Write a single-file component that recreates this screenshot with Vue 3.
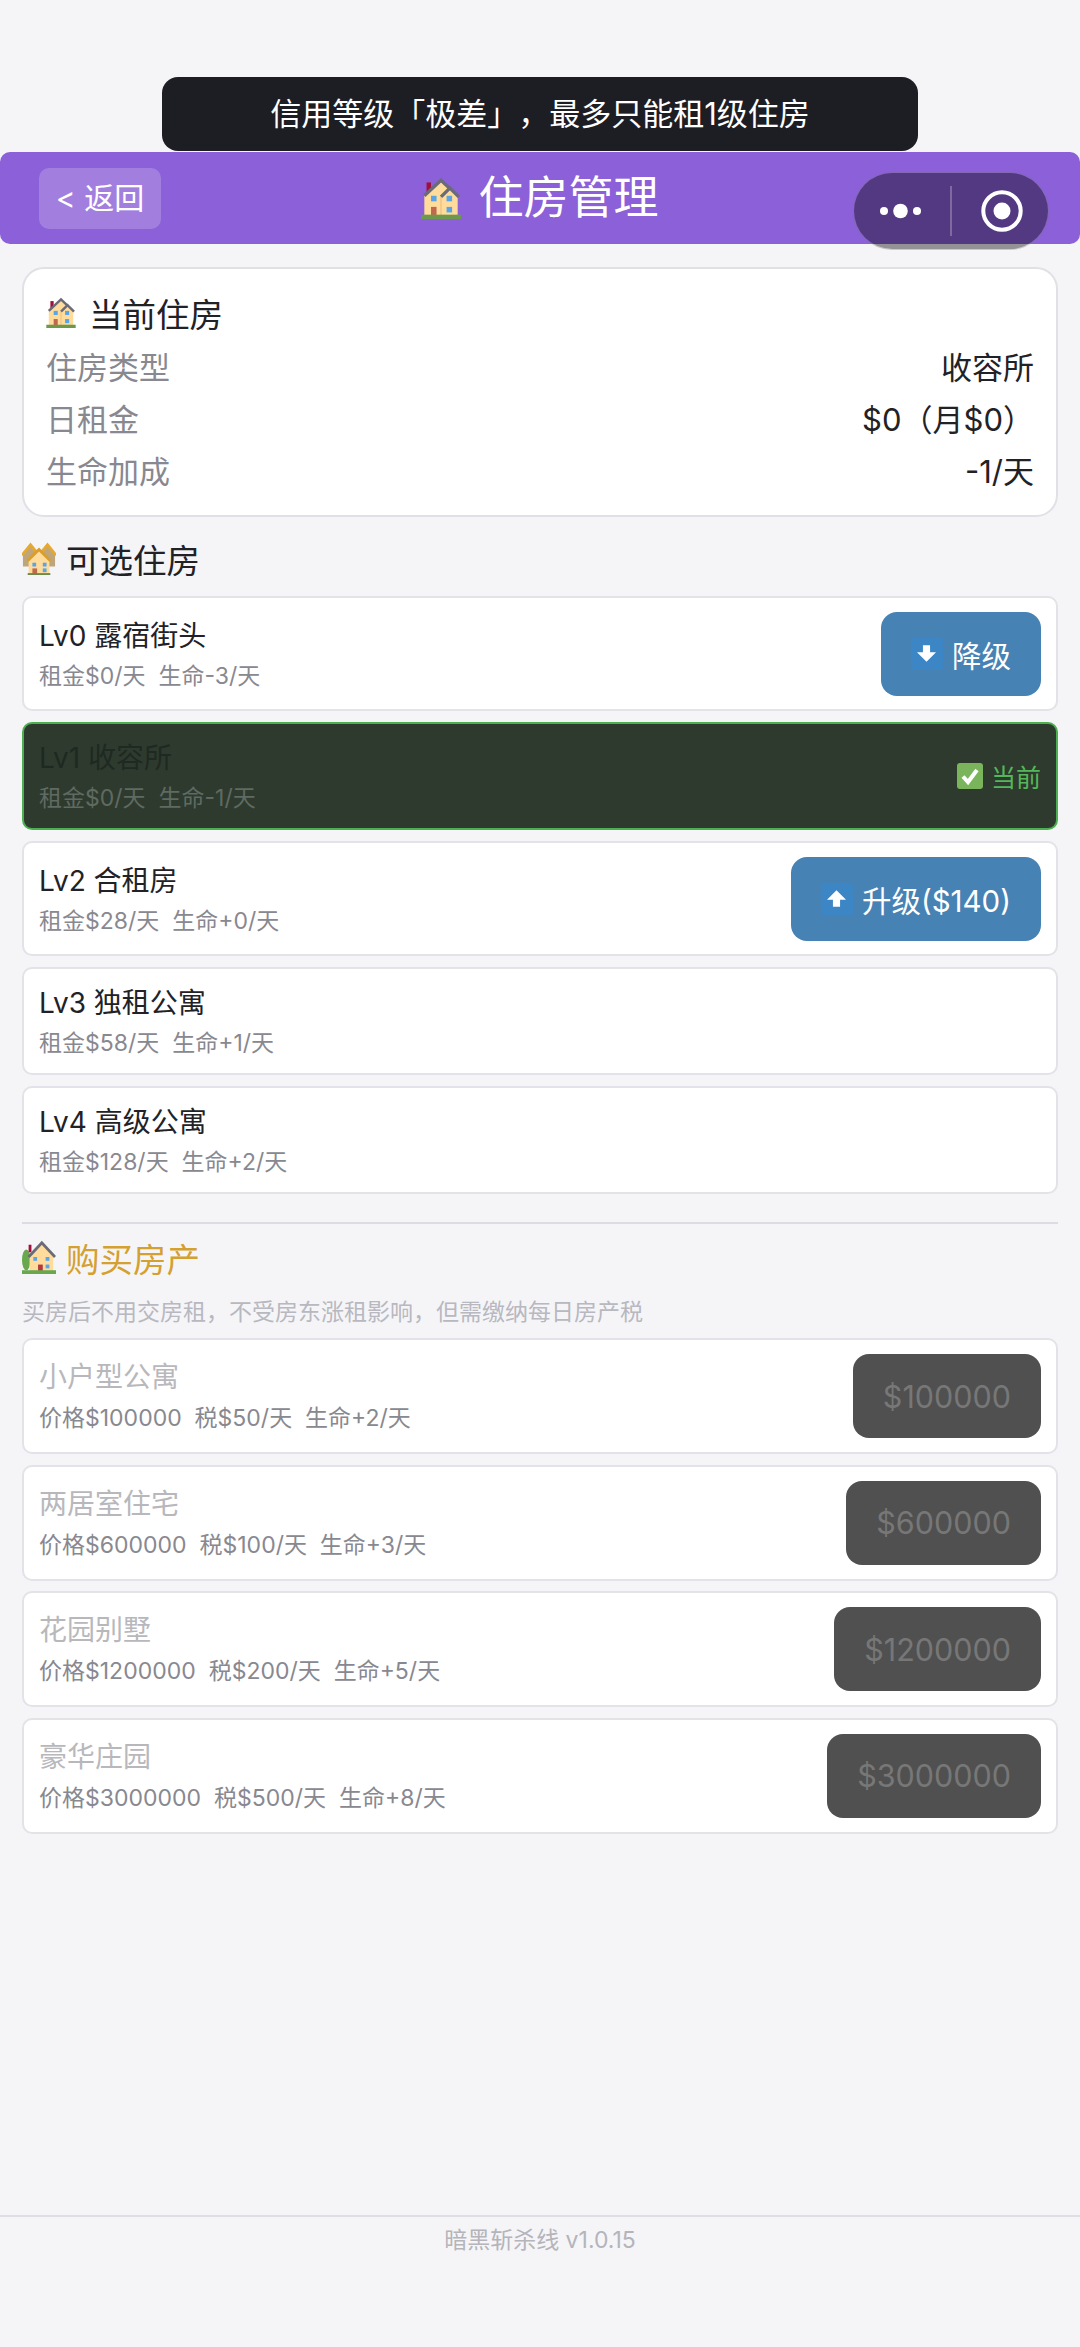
<template>
  <div class="page">
    <!-- emoji glyphs are not installed, so they are drawn once and reused -->
    <svg class="sprites" width="0" height="0">
      <symbol id="house" viewBox="0 0 36 38">
        <rect x="5" y="5" width="4" height="9" fill="#a0103a" />
        <path d="M3 16 18 2l15 14v19H3z" fill="#ffdc9c" />
        <path d="M3 17 18 3l8 7.5" fill="none" stroke="#6b6b78" stroke-width="3" />
        <path d="M18 18l8-8 8 8" fill="none" stroke="#6b6b78" stroke-width="3" />
        <path d="M18 18v17" stroke="#e8bd7a" stroke-width="1" />
        <rect x="9" y="17" width="5" height="5" fill="#5aa5e6" />
        <rect x="23" y="17" width="5" height="5" fill="#5aa5e6" />
        <rect x="23" y="27" width="5" height="5" fill="#5aa5e6" />
        <rect x="9" y="27" width="5" height="8" fill="#c1694f" />
        <rect y="34" width="36" height="4" fill="#6d9a4a" />
      </symbol>
      <symbol id="houses" viewBox="0 0 36 36">
        <path d="M1 15 9 5l8 10v12H1z" fill="#bfa67a" />
        <path d="M19 15l8-10 8 10v12H19z" fill="#bfa67a" />
        <path d="M0 15 9 4l9 11M18 15l9-11 9 11" fill="none" stroke="#e6a82e" stroke-width="3" />
        <path d="M7 21 18 10l11 11v15H7z" fill="#ffdc9c" />
        <path d="M6 21 18 9l12 12" fill="none" stroke="#d99e2b" stroke-width="3" />
        <rect x="11" y="23" width="4" height="4" fill="#5aa5e6" />
        <rect x="22" y="23" width="4" height="4" fill="#5aa5e6" />
        <rect x="22" y="29" width="4" height="4" fill="#5aa5e6" />
        <rect x="11" y="29" width="5" height="6" fill="#c1694f" />
        <rect x="6" y="34" width="24" height="2" fill="#6d8a4a" />
      </symbol>
      <symbol id="garden" viewBox="0 0 36 36">
        <ellipse cx="4.5" cy="21" rx="4.5" ry="11" fill="#6aa84f" />
        <rect x="7" y="5" width="3" height="8" fill="#a0103a" />
        <path d="M8 17 21 4l12 13v16H8z" fill="#ffdc9c" />
        <path d="M7 18 21 3l14 15" fill="none" stroke="#6b6b78" stroke-width="3" />
        <rect x="12" y="18" width="4" height="4" fill="#5aa5e6" />
        <rect x="25" y="18" width="4" height="4" fill="#5aa5e6" />
        <rect x="25" y="26" width="4" height="4" fill="#5aa5e6" />
        <rect x="17" y="26" width="5" height="7" fill="#b5383e" />
        <rect y="32" width="36" height="4" fill="#6aa84f" />
      </symbol>
    </svg>

    <div class="toast">信用等级「极差」，最多只能租1级住房</div>

    <header class="header">
      <div class="back">&lt; 返回</div>
      <div class="header-title">
        <svg class="emoji emoji-lg"><use href="#house" /></svg>
        <span>住房管理</span>
      </div>
    </header>

    <div class="capsule">
      <svg class="capsule-dots" viewBox="0 0 43 16">
        <circle cx="5" cy="8" r="4" fill="#fff" />
        <circle cx="21.5" cy="8" r="7.3" fill="#fff" />
        <circle cx="38" cy="8" r="4" fill="#fff" />
      </svg>
      <span class="capsule-line"></span>
      <svg class="capsule-target" viewBox="0 0 44 44">
        <circle cx="22" cy="22" r="18.7" fill="none" stroke="#fff" stroke-width="4" />
        <circle cx="22" cy="22" r="8.5" fill="#fff" />
      </svg>
    </div>

    <main class="content">
      <section class="card">
        <div class="card-title">
          <svg class="emoji"><use href="#house" /></svg>
          <span>当前住房</span>
        </div>
        <div v-for="row in currentRows" :key="row.label" class="card-row">
          <span class="card-label">{{ row.label }}</span>
          <span class="card-value">{{ row.value }}</span>
        </div>
      </section>

      <div class="section-title">
        <svg class="emoji"><use href="#houses" /></svg>
        <span>可选住房</span>
      </div>

      <div class="list">
        <div v-for="item in rentals" :key="item.name" class="item" :class="{ current: item.current }">
          <div class="item-text">
            <div class="item-name">{{ item.name }}</div>
            <div class="item-sub">{{ item.sub }}</div>
          </div>
          <div v-if="item.action" class="btn">
            <span class="arrow">
              <svg viewBox="0 0 16 16">
                <path :d="item.up ? 'M8 1 16 9h-5v6H5V9H0z' : 'M8 15 0 7h5V1h6v6h5z'" fill="#fff" />
              </svg>
            </span>
            <span>{{ item.action }}</span>
          </div>
          <div v-if="item.current" class="current-tag">
            <svg class="check" viewBox="0 0 26 26">
              <rect width="26" height="26" rx="3" fill="#7ab55c" />
              <path d="M6 13.5l5 5.5 9-12" fill="none" stroke="#fff" stroke-width="4" />
            </svg>
            <span>当前</span>
          </div>
        </div>
      </div>

      <div class="divider"></div>

      <div class="section-title gold">
        <svg class="emoji"><use href="#garden" /></svg>
        <span>购买房产</span>
      </div>
      <p class="hint">买房后不用交房租，不受房东涨租影响，但需缴纳每日房产税</p>

      <div class="list buy-list">
        <div v-for="prop in properties" :key="prop.name" class="item buy-item">
          <div class="item-text">
            <div class="item-name muted">{{ prop.name }}</div>
            <div class="item-sub">{{ prop.sub }}</div>
          </div>
          <div class="btn btn-off">{{ prop.price }}</div>
        </div>
      </div>
    </main>

    <footer class="footer">暗黑斩杀线 v1.0.15</footer>
  </div>
</template>

<script setup>
const currentRows = [
  { label: '住房类型', value: '收容所' },
  { label: '日租金', value: '$0（月$0）' },
  { label: '生命加成', value: '-1/天' }
]

const rentals = [
  { name: 'Lv0 露宿街头', sub: '租金$0/天  生命-3/天', action: '降级', up: false },
  { name: 'Lv1 收容所', sub: '租金$0/天  生命-1/天', current: true },
  { name: 'Lv2 合租房', sub: '租金$28/天  生命+0/天', action: '升级($140)', up: true },
  { name: 'Lv3 独租公寓', sub: '租金$58/天  生命+1/天' },
  { name: 'Lv4 高级公寓', sub: '租金$128/天  生命+2/天' }
]

const properties = [
  { name: '小户型公寓', sub: '价格$100000  税$50/天  生命+2/天', price: '$100000' },
  { name: '两居室住宅', sub: '价格$600000  税$100/天  生命+3/天', price: '$600000' },
  { name: '花园别墅', sub: '价格$1200000  税$200/天  生命+5/天', price: '$1200000' },
  { name: '豪华庄园', sub: '价格$3000000  税$500/天  生命+8/天', price: '$3000000' }
]
</script>

<style>
html,
body {
  margin: 0;
  background: #f5f5f8;
}
</style>

<style scoped>
.page {
  position: relative;
  display: flex;
  flex-direction: column;
  width: 1080px;
  height: 2347px;
  padding-top: 152px;
  box-sizing: border-box;
  overflow: hidden;
  background: #f5f5f8;
  color: #222226;
  font-family: Inter, "Noto Sans CJK SC", sans-serif;
  text-spacing-trim: space-all;
}

.sprites {
  position: absolute;
}

.toast {
  position: absolute;
  top: 77px;
  left: 162px;
  width: 756px;
  height: 74px;
  border-radius: 16px;
  background: #1d1d24;
  color: #fff;
  font-size: 31px;
  line-height: 74px;
  text-align: center;
}

.header {
  display: grid;
  grid-template-columns: 1fr auto 1fr;
  align-items: center;
  height: 92px;
  padding: 0 39px;
  border-radius: 10px;
  background: #8b60d8;
  color: #fff;
}

.back {
  justify-self: start;
  width: 122px;
  height: 61px;
  border-radius: 10px;
  background: rgba(255, 255, 255, 0.2);
  font-size: 30px;
  line-height: 61px;
  text-align: center;
}

.header-title {
  display: flex;
  align-items: center;
  gap: 17px;
  font-size: 45px;
  line-height: 60px;
}

.capsule {
  position: absolute;
  top: 173px;
  left: 854px;
  display: flex;
  align-items: center;
  width: 194px;
  height: 76px;
  border-radius: 38px;
  background: rgba(0, 0, 0, 0.4);
  box-shadow: 0 0 0 1px rgba(120, 120, 120, 0.35);
}

.capsule-dots {
  width: 43px;
  height: 16px;
  margin-left: 25px;
}

.capsule-line {
  width: 2px;
  height: 50px;
  margin-left: 28px;
  background: rgba(255, 255, 255, 0.25);
}

.capsule-target {
  width: 44px;
  height: 44px;
  margin-left: 28px;
}

.content {
  display: flex;
  flex-direction: column;
  padding: 23px 22px 0;
}

.card {
  height: 250px;
  padding: 17px 22px 0;
  border: 2px solid #e0e0e6;
  border-radius: 22px;
  box-sizing: border-box;
  background: #fff;
}

.card-title {
  display: flex;
  align-items: center;
  gap: 13px;
  height: 52px;
  margin-bottom: 4px;
  font-size: 33.5px;
}

.card-row {
  display: flex;
  justify-content: space-between;
  height: 52px;
  font-size: 31px;
  line-height: 52px;
}

.card-label {
  color: #888890;
}

.emoji {
  flex: none;
  width: 30px;
  height: 31px;
}

.emoji-lg {
  width: 40px;
  height: 44px;
}

.section-title {
  display: flex;
  align-items: center;
  gap: 10px;
  height: 52px;
  margin: 15px 0 12px;
  font-size: 33.5px;
}

.section-title .emoji {
  width: 34px;
  height: 34px;
}

.list {
  display: flex;
  flex-direction: column;
  gap: 11px;
}

.item {
  display: flex;
  align-items: center;
  justify-content: space-between;
  padding: 10px 15px;
  border: 2px solid #e2e2e8;
  border-radius: 10px;
  background: #fff;
}

.item-text {
  padding-top: 4px;
}

.item-name {
  font-size: 28px;
  line-height: 40px;
}

.item-sub {
  color: #888890;
  font-size: 23px;
  line-height: 40px;
  white-space: pre;
}

.buy-item .item-sub {
  line-height: 42px;
}

.muted {
  color: #b8b8bc;
}

.current {
  border-color: #4caf50;
  background: #2e3a2e;
}

.current .item-name {
  color: #1e2922;
}

.current .item-sub {
  color: #5f6a62;
}

.current-tag {
  display: flex;
  align-items: center;
  gap: 8px;
  color: #55b65a;
  font-size: 25px;
}

.check {
  width: 26px;
  height: 26px;
}

.btn {
  display: flex;
  align-items: center;
  gap: 9px;
  height: 84px;
  margin: 3.5px 0;
  padding: 0 30px;
  border-radius: 16px;
  background: #4682b4;
  color: #fff;
  font-size: 29.5px;
}

.btn-off {
  margin: 4px 0;
  background: #505050;
  color: #777;
  font-size: 30.5px;
}

.arrow {
  display: flex;
  align-items: center;
  justify-content: center;
  width: 32px;
  height: 32px;
  border-radius: 3px;
  background: #3d86c6;
}

.arrow svg {
  width: 19px;
  height: 19px;
}

.divider {
  height: 2px;
  margin-top: 28px;
  background: #dcdce2;
}

.divider + .section-title {
  margin: 7px 0 0;
}

.gold {
  color: #d4a030;
}

.hint {
  margin: 11px 0 8px;
  color: #b8b8c0;
  font-size: 23px;
  line-height: 36px;
}

.buy-list {
  gap: 10.5px;
}

.footer {
  flex: none;
  height: 132px;
  margin-top: auto;
  padding-top: 6px;
  box-sizing: border-box;
  border-top: 2px solid #dedee4;
  color: #b4b4ba;
  font-size: 23px;
  line-height: 34px;
  text-align: center;
}
</style>
